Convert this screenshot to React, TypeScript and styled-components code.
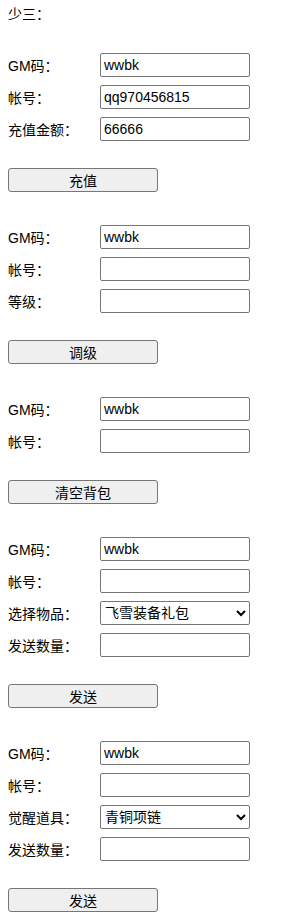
import React from 'react';
import styled, {createGlobalStyle} from "styled-components";

const GlobalStyle = createGlobalStyle`
	body {
		margin: 0;
		font-family: "Liberation Sans", "Noto Sans CJK SC", sans-serif;
		font-size: 14px;
		color: #000;
		background: #fff;
	}
`

type Field = { label: string, value?: string, options?: string[] }
type Form = { fields: Field[], button: string }

const forms: Form[] = [
	{
		fields: [
			{label: "GM码：", value: "wwbk"},
			{label: "帐号：", value: "qq970456815"},
			{label: "充值金额：", value: "66666"},
		],
		button: "充值",
	},
	{
		fields: [
			{label: "GM码：", value: "wwbk"},
			{label: "帐号："},
			{label: "等级："},
		],
		button: "调级",
	},
	{
		fields: [
			{label: "GM码：", value: "wwbk"},
			{label: "帐号："},
		],
		button: "清空背包",
	},
	{
		fields: [
			{label: "GM码：", value: "wwbk"},
			{label: "帐号："},
			{label: "选择物品：", options: ["飞雪装备礼包"]},
			{label: "发送数量："},
		],
		button: "发送",
	},
	{
		fields: [
			{label: "GM码：", value: "wwbk"},
			{label: "帐号："},
			{label: "觉醒道具：", options: ["青铜项链"]},
			{label: "发送数量："},
		],
		button: "发送",
	},
]

function App() {
	return (
		<Page>
			<GlobalStyle/>
			<Title>少三：</Title>
			{forms.map((f, i) => (
				<Section key={i}>
					<Fields>
						{f.fields.map((fd, j) => (
							<Row key={j}>
								<Label>{fd.label}</Label>
								{fd.options
									? <Select defaultValue={fd.options[0]}>
										{fd.options.map(o => <option key={o}>{o}</option>)}
									</Select>
									: <Input defaultValue={fd.value ?? ""}/>}
							</Row>
						))}
					</Fields>
					<Button>{f.button}</Button>
				</Section>
			))}
		</Page>
	);
}

export default App;

const Page = styled.div`
	padding: 0 8px;
`

const Title = styled.div`
	height: 28px;
	line-height: 28px;
	margin-bottom: 25px;
`

const Section = styled.div`
	margin-bottom: 33px;
`

const Fields = styled.div`
	display: flex;
	flex-direction: column;
	gap: 8px;
`

const Row = styled.div`
	display: flex;
	align-items: center;
	height: 24px;
`

const Label = styled.span`
	width: 92px;
	flex-shrink: 0;
`

const Input = styled.input`
	box-sizing: border-box;
	width: 150px;
	height: 24px;
	padding: 1px 3px;
	border: 1px solid #767676;
	border-radius: 2px;
	font-family: "Liberation Sans", "Noto Sans CJK SC", sans-serif;
	font-size: 14px;
	color: #000;
	background: #fff;
`

const Select = styled.select`
	box-sizing: border-box;
	width: 150px;
	height: 24px;
	border: 1px solid #767676;
	border-radius: 2px;
	font-family: "Liberation Sans", "Noto Sans CJK SC", sans-serif;
	font-size: 14px;
	color: #000;
	background: #fff;
`

const Button = styled.button`
	display: block;
	box-sizing: border-box;
	width: 150px;
	height: 24px;
	margin-top: 27px;
	border: 1px solid #767676;
	border-radius: 3px;
	background: #efefef;
	font-family: "Liberation Sans", "Noto Sans CJK SC", sans-serif;
	font-size: 14px;
	color: #000;
`
